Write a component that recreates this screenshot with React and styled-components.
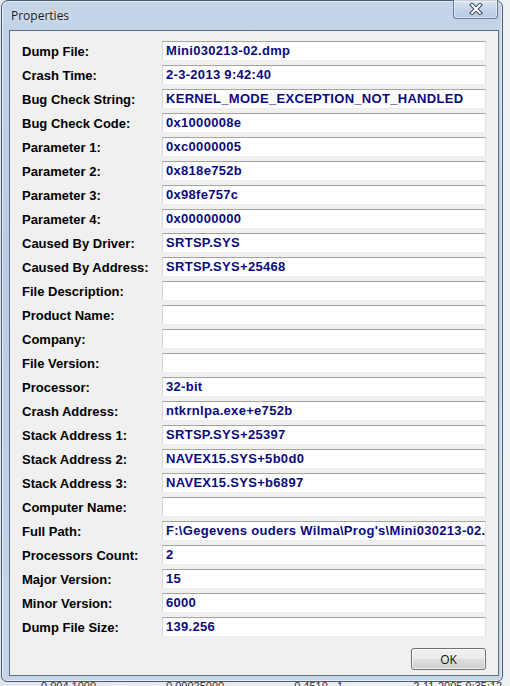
import React from 'react';
import styled, { createGlobalStyle } from 'styled-components';

const GlobalStyle = createGlobalStyle`
    html, body {
        margin: 0;
        padding: 0;
    }
    body {
        background: #e7ecf2;
        font-family: "Liberation Sans", Arial, sans-serif;
    }
`;

const Page = styled.div`
    width: 510px;
    height: 686px;
    overflow: hidden;
    padding-left: 1px;
    box-sizing: border-box;
    background: linear-gradient(90deg, #dfe6ee 0%, #eef2f6 100%);
`;

const Window = styled.div`
    width: 502px;
    height: 682px;
    box-sizing: border-box;
    border: 1px solid #4b5a6e;
    border-radius: 7px 7px 6px 6px;
    background: linear-gradient(180deg, #c3d4e8 0%, #b9cce3 40%, #c6d6e8 100%);
    box-shadow: inset 0 0 0 1px rgba(255, 255, 255, 0.55);
    display: flex;
    flex-direction: column;
    padding: 0 3px 5px 7px;
`;

const TitleBar = styled.div`
    height: 29px;
    display: flex;
    align-items: flex-start;
    justify-content: space-between;
`;

const Title = styled.div`
    font-family: "Open Sans", "Noto Sans", sans-serif;
    font-size: 12px;
    color: #1b1b1b;
    padding: 6px 0 0 2px;
    text-shadow: 0 0 6px rgba(255, 255, 255, 0.9);
`;

const CloseButton = styled.div`
    width: 45px;
    height: 19px;
    margin-right: 1px;
    margin-top: -1px;
    box-sizing: border-box;
    border: 1px solid #6b7a90;
    border-top: none;
    border-radius: 0 0 4px 4px;
    background: linear-gradient(180deg, rgba(255, 255, 255, 0.45) 0%, rgba(200, 215, 235, 0.3) 50%, rgba(170, 190, 215, 0.4) 100%);
    box-shadow: inset 0 0 0 1px rgba(255, 255, 255, 0.5);
    display: flex;
    align-items: center;
    justify-content: center;
`;

const Client = styled.div`
    flex: 1;
    border: 1px solid #5f6f86;
    background: #f0f0f0;
    padding: 10px 12px 0 12px;
    display: flex;
    flex-direction: column;
`;

const Rows = styled.div`
    display: flex;
    flex-direction: column;
    gap: 4px;
`;

const Row = styled.div`
    display: flex;
    align-items: center;
    height: 20px;
`;

const Label = styled.div`
    width: 140px;
    font-size: 13px;
    font-weight: bold;
    color: #000;
    white-space: nowrap;
`;

const Field = styled.div`
    flex: 1;
    height: 20px;
    box-sizing: border-box;
    background: #fff;
    border-top: 1px solid #a3a3a3;
    border-left: 1px solid #d6d6d6;
    border-right: 1px solid #e2e2e2;
    border-bottom: 1px solid #ececec;
    padding: 0 3px;
    font-size: 13px;
    font-weight: bold;
    letter-spacing: 0.3px;
    color: #0a0a80;
    line-height: 18px;
    white-space: nowrap;
    overflow: hidden;
`;

const Footer = styled.div`
    display: flex;
    justify-content: flex-end;
    padding-top: 11px;
`;

const OkButton = styled.button`
    width: 75px;
    height: 22px;
    box-sizing: border-box;
    border: 1px solid #707070;
    border-radius: 3px;
    background: linear-gradient(180deg, #f2f2f2 0%, #ebebeb 48%, #dddddd 52%, #cfcfcf 100%);
    box-shadow: inset 0 0 0 1px rgba(255, 255, 255, 0.7);
    font-family: "Open Sans", "Noto Sans", sans-serif;
    font-size: 12px;
    color: #111;
    padding: 0;
`;

const Backdrop = styled.div`
    display: flex;
    gap: 70px;
    padding-left: 40px;
    font-size: 11px;
    color: #333;
    line-height: 12px;
    margin-top: -2px;
`;

const fields = [
    ['Dump File:', 'Mini030213-02.dmp'],
    ['Crash Time:', '2-3-2013 9:42:40'],
    ['Bug Check String:', 'KERNEL_MODE_EXCEPTION_NOT_HANDLED'],
    ['Bug Check Code:', '0x1000008e'],
    ['Parameter 1:', '0xc0000005'],
    ['Parameter 2:', '0x818e752b'],
    ['Parameter 3:', '0x98fe757c'],
    ['Parameter 4:', '0x00000000'],
    ['Caused By Driver:', 'SRTSP.SYS'],
    ['Caused By Address:', 'SRTSP.SYS+25468'],
    ['File Description:', ''],
    ['Product Name:', ''],
    ['Company:', ''],
    ['File Version:', ''],
    ['Processor:', '32-bit'],
    ['Crash Address:', 'ntkrnlpa.exe+e752b'],
    ['Stack Address 1:', 'SRTSP.SYS+25397'],
    ['Stack Address 2:', 'NAVEX15.SYS+5b0d0'],
    ['Stack Address 3:', 'NAVEX15.SYS+b6897'],
    ['Computer Name:', ''],
    ['Full Path:', "F:\\Gegevens ouders Wilma\\Prog's\\Mini030213-02.dmp"],
    ['Processors Count:', '2'],
    ['Major Version:', '15'],
    ['Minor Version:', '6000'],
    ['Dump File Size:', '139.256'],
];

function CloseIcon() {
    return (
        <svg width="14" height="12" viewBox="0 0 14 12">
            <path d="M3 2 L11 10 M11 2 L3 10" stroke="#3a4658" strokeWidth="4" strokeLinecap="square" />
            <path d="M3 2 L11 10 M11 2 L3 10" stroke="#ffffff" strokeWidth="2" strokeLinecap="square" />
        </svg>
    );
}

function App() {
    return (
        <Page>
            <GlobalStyle />
            <Window>
                <TitleBar>
                    <Title>Properties</Title>
                    <CloseButton>
                        <CloseIcon />
                    </CloseButton>
                </TitleBar>
                <Client>
                    <Rows>
                        {fields.map(([label, value]) => (
                            <Row key={label}>
                                <Label>{label}</Label>
                                <Field>{value}</Field>
                            </Row>
                        ))}
                    </Rows>
                    <Footer>
                        <OkButton>OK</OkButton>
                    </Footer>
                </Client>
            </Window>
            <Backdrop>
                <span>0.004 1000</span>
                <span>0.00025000</span>
                <span>0.4510 ..1</span>
                <span>2-11-2005 9:35:12</span>
            </Backdrop>
        </Page>
    );
}

export default App;
